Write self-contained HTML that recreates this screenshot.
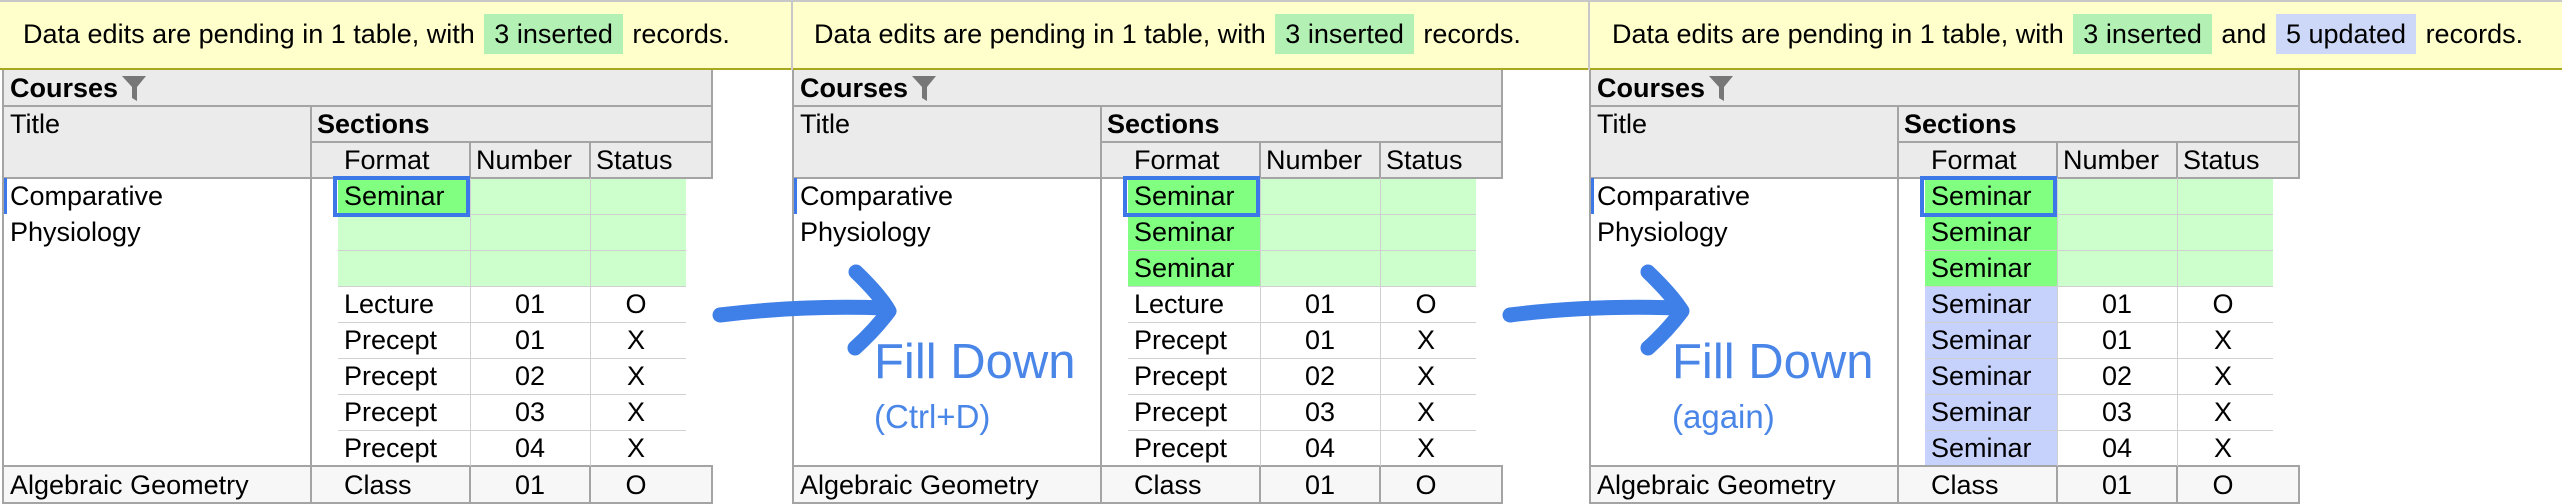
<!DOCTYPE html>
<html><head><meta charset="utf-8"><style>
*{margin:0;padding:0;box-sizing:border-box}
body{width:2562px;height:504px;position:relative;overflow:hidden;background:#fff;font-family:"Liberation Sans",sans-serif;font-size:27px;color:#000}
.a{position:absolute}
.t{position:absolute;line-height:36px;white-space:nowrap}
.c{text-align:center}
.ban{position:absolute;left:0;top:0;width:2562px;height:70px;background:#ffffcc;border-top:2px solid #c8c8c8;border-bottom:2px solid #a8a820}
.bt{position:absolute;top:14px;line-height:40px;white-space:nowrap;font-size:27px}
.ins{display:inline-block;background:#b3f0b3;padding:0 10px;margin:0 2px}
.upd{display:inline-block;background:#cdd8f8;padding:0 10px;margin:0 2px}
.p{position:absolute;top:0;width:712px;height:504px}
.hd{position:absolute;left:0;top:70px;width:711px;height:108px;background:#ebebeb}
.hl{position:absolute;height:2px;background:#a4a4a4}
.vl{position:absolute;width:2px;background:#a4a4a4}
.sl{position:absolute;height:1px;background:#d0d0d0}
.sv{position:absolute;width:1px;background:#d0d0d0}
.fill{font-size:49px;color:#4a86e8;position:absolute;white-space:nowrap}
.sub{font-size:33px;color:#4a86e8;position:absolute;white-space:nowrap}
</style></head><body>

<div class="ban"></div>
<div class="a" style="left:791px;top:0;width:2px;height:70px;background:#c8c8c8"></div>
<div class="a" style="left:1588px;top:0;width:2px;height:70px;background:#c8c8c8"></div>
<div class="bt" style="left:23px">Data edits are pending in 1 table, with <span class="ins">3 inserted</span> records.</div>
<div class="bt" style="left:814px">Data edits are pending in 1 table, with <span class="ins">3 inserted</span> records.</div>
<div class="bt" style="left:1612px">Data edits are pending in 1 table, with <span class="ins">3 inserted</span> and <span class="upd">5 updated</span> records.</div>

<!-- PANEL TEMPLATE x3 -->
<div class="p" style="left:2px">
 <div class="hd"></div>
 <div class="a" style="left:0;top:466px;width:711px;height:38px;background:#f7f7f7"></div>
 <div class="a" style="left:336px;top:178px;width:348px;height:108px;background:#ccffcc"></div>
 <div class="a" style="left:336px;top:178px;width:132px;height:36px;background:#80ff80"></div>
 <div class="hl" style="left:0;top:105px;width:711px"></div>
 <div class="hl" style="left:309px;top:141px;width:402px"></div>
 <div class="hl" style="left:0;top:177px;width:711px"></div>
 <div class="hl" style="left:0;top:465px;width:711px"></div>
 <div class="hl" style="left:0;top:502px;width:711px"></div>
 <div class="vl" style="left:0;top:70px;height:434px"></div>
 <div class="vl" style="left:308px;top:107px;height:397px"></div>
 <div class="vl" style="left:467px;top:142px;height:36px"></div>
 <div class="vl" style="left:587px;top:142px;height:36px"></div>
 <div class="vl" style="left:467px;top:466px;height:38px"></div>
 <div class="vl" style="left:587px;top:466px;height:38px"></div>
 <div class="vl" style="left:709px;top:70px;height:108px"></div>
 <div class="vl" style="left:709px;top:466px;height:38px"></div>
 <div class="sv" style="left:468px;top:178px;height:288px"></div>
 <div class="sv" style="left:588px;top:178px;height:288px"></div>
 <div class="sl" style="left:336px;top:214px;width:348px"></div>
 <div class="sl" style="left:336px;top:250px;width:348px"></div>
 <div class="sl" style="left:336px;top:286px;width:348px"></div>
 <div class="sl" style="left:336px;top:322px;width:348px"></div>
 <div class="sl" style="left:336px;top:358px;width:348px"></div>
 <div class="sl" style="left:336px;top:394px;width:348px"></div>
 <div class="sl" style="left:336px;top:430px;width:348px"></div>
 <div class="a" style="left:331px;top:176px;width:137px;height:41px;border:4px solid #3c78e8"></div>
 <div class="a" style="left:2px;top:178px;width:3px;height:36px;background:#3c78e8"></div>
 <div class="t" style="left:8px;top:70px;font-weight:bold">Courses</div>
 <svg class="a" style="left:120px;top:76px" width="24" height="26" viewBox="0 0 24 26"><path d="M0 0H24L15 11V25L10 22V11Z" fill="#777"/></svg>
 <div class="t" style="left:8px;top:106px">Title</div>
 <div class="t" style="left:315px;top:106px;font-weight:bold">Sections</div>
 <div class="t" style="left:342px;top:142px">Format</div>
 <div class="t" style="left:474px;top:142px">Number</div>
 <div class="t" style="left:594px;top:142px">Status</div>
 <div class="t" style="left:8px;top:178px">Comparative</div>
 <div class="t" style="left:8px;top:214px">Physiology</div>
 <div class="t" style="left:342px;top:178px">Seminar</div>
 <div class="t" style="left:342px;top:286px">Lecture</div>
 <div class="t" style="left:342px;top:322px">Precept</div>
 <div class="t" style="left:342px;top:358px">Precept</div>
 <div class="t" style="left:342px;top:394px">Precept</div>
 <div class="t" style="left:342px;top:430px">Precept</div>
 <div class="t c" style="left:468px;width:120px;top:286px">01</div>
 <div class="t c" style="left:468px;width:120px;top:322px">01</div>
 <div class="t c" style="left:468px;width:120px;top:358px">02</div>
 <div class="t c" style="left:468px;width:120px;top:394px">03</div>
 <div class="t c" style="left:468px;width:120px;top:430px">04</div>
 <div class="t c" style="left:588px;width:92px;top:286px">O</div>
 <div class="t c" style="left:588px;width:92px;top:322px">X</div>
 <div class="t c" style="left:588px;width:92px;top:358px">X</div>
 <div class="t c" style="left:588px;width:92px;top:394px">X</div>
 <div class="t c" style="left:588px;width:92px;top:430px">X</div>
 <div class="t" style="left:8px;top:467px">Algebraic Geometry</div>
 <div class="t" style="left:342px;top:467px">Class</div>
 <div class="t c" style="left:468px;width:120px;top:467px">01</div>
 <div class="t c" style="left:588px;width:92px;top:467px">O</div>
</div>

<div class="p" style="left:792px">
 <div class="hd"></div>
 <div class="a" style="left:0;top:466px;width:711px;height:38px;background:#f7f7f7"></div>
 <div class="a" style="left:336px;top:178px;width:348px;height:108px;background:#ccffcc"></div>
 <div class="a" style="left:336px;top:178px;width:132px;height:108px;background:#80ff80"></div>
 <div class="hl" style="left:0;top:105px;width:711px"></div>
 <div class="hl" style="left:309px;top:141px;width:402px"></div>
 <div class="hl" style="left:0;top:177px;width:711px"></div>
 <div class="hl" style="left:0;top:465px;width:711px"></div>
 <div class="hl" style="left:0;top:502px;width:711px"></div>
 <div class="vl" style="left:0;top:70px;height:434px"></div>
 <div class="vl" style="left:308px;top:107px;height:397px"></div>
 <div class="vl" style="left:467px;top:142px;height:36px"></div>
 <div class="vl" style="left:587px;top:142px;height:36px"></div>
 <div class="vl" style="left:467px;top:466px;height:38px"></div>
 <div class="vl" style="left:587px;top:466px;height:38px"></div>
 <div class="vl" style="left:709px;top:70px;height:108px"></div>
 <div class="vl" style="left:709px;top:466px;height:38px"></div>
 <div class="sv" style="left:468px;top:178px;height:288px"></div>
 <div class="sv" style="left:588px;top:178px;height:288px"></div>
 <div class="sl" style="left:336px;top:214px;width:348px"></div>
 <div class="sl" style="left:336px;top:250px;width:348px"></div>
 <div class="sl" style="left:336px;top:286px;width:348px"></div>
 <div class="sl" style="left:336px;top:322px;width:348px"></div>
 <div class="sl" style="left:336px;top:358px;width:348px"></div>
 <div class="sl" style="left:336px;top:394px;width:348px"></div>
 <div class="sl" style="left:336px;top:430px;width:348px"></div>
 <div class="a" style="left:331px;top:176px;width:137px;height:41px;border:4px solid #3c78e8"></div>
 <div class="a" style="left:2px;top:178px;width:3px;height:36px;background:#3c78e8"></div>
 <div class="t" style="left:8px;top:70px;font-weight:bold">Courses</div>
 <svg class="a" style="left:120px;top:76px" width="24" height="26" viewBox="0 0 24 26"><path d="M0 0H24L15 11V25L10 22V11Z" fill="#777"/></svg>
 <div class="t" style="left:8px;top:106px">Title</div>
 <div class="t" style="left:315px;top:106px;font-weight:bold">Sections</div>
 <div class="t" style="left:342px;top:142px">Format</div>
 <div class="t" style="left:474px;top:142px">Number</div>
 <div class="t" style="left:594px;top:142px">Status</div>
 <div class="t" style="left:8px;top:178px">Comparative</div>
 <div class="t" style="left:8px;top:214px">Physiology</div>
 <div class="t" style="left:342px;top:178px">Seminar</div>
 <div class="t" style="left:342px;top:214px">Seminar</div>
 <div class="t" style="left:342px;top:250px">Seminar</div>
 <div class="t" style="left:342px;top:286px">Lecture</div>
 <div class="t" style="left:342px;top:322px">Precept</div>
 <div class="t" style="left:342px;top:358px">Precept</div>
 <div class="t" style="left:342px;top:394px">Precept</div>
 <div class="t" style="left:342px;top:430px">Precept</div>
 <div class="t c" style="left:468px;width:120px;top:286px">01</div>
 <div class="t c" style="left:468px;width:120px;top:322px">01</div>
 <div class="t c" style="left:468px;width:120px;top:358px">02</div>
 <div class="t c" style="left:468px;width:120px;top:394px">03</div>
 <div class="t c" style="left:468px;width:120px;top:430px">04</div>
 <div class="t c" style="left:588px;width:92px;top:286px">O</div>
 <div class="t c" style="left:588px;width:92px;top:322px">X</div>
 <div class="t c" style="left:588px;width:92px;top:358px">X</div>
 <div class="t c" style="left:588px;width:92px;top:394px">X</div>
 <div class="t c" style="left:588px;width:92px;top:430px">X</div>
 <div class="t" style="left:8px;top:467px">Algebraic Geometry</div>
 <div class="t" style="left:342px;top:467px">Class</div>
 <div class="t c" style="left:468px;width:120px;top:467px">01</div>
 <div class="t c" style="left:588px;width:92px;top:467px">O</div>
</div>

<div class="p" style="left:1589px">
 <div class="hd"></div>
 <div class="a" style="left:0;top:466px;width:711px;height:38px;background:#f7f7f7"></div>
 <div class="a" style="left:336px;top:178px;width:348px;height:108px;background:#ccffcc"></div>
 <div class="a" style="left:336px;top:178px;width:132px;height:108px;background:#80ff80"></div>
 <div class="a" style="left:336px;top:286px;width:132px;height:180px;background:#c6d2fc"></div>
 <div class="hl" style="left:0;top:105px;width:711px"></div>
 <div class="hl" style="left:309px;top:141px;width:402px"></div>
 <div class="hl" style="left:0;top:177px;width:711px"></div>
 <div class="hl" style="left:0;top:465px;width:711px"></div>
 <div class="hl" style="left:0;top:502px;width:711px"></div>
 <div class="vl" style="left:0;top:70px;height:434px"></div>
 <div class="vl" style="left:308px;top:107px;height:397px"></div>
 <div class="vl" style="left:467px;top:142px;height:36px"></div>
 <div class="vl" style="left:587px;top:142px;height:36px"></div>
 <div class="vl" style="left:467px;top:466px;height:38px"></div>
 <div class="vl" style="left:587px;top:466px;height:38px"></div>
 <div class="vl" style="left:709px;top:70px;height:108px"></div>
 <div class="vl" style="left:709px;top:466px;height:38px"></div>
 <div class="sv" style="left:468px;top:178px;height:288px"></div>
 <div class="sv" style="left:588px;top:178px;height:288px"></div>
 <div class="sl" style="left:336px;top:214px;width:348px"></div>
 <div class="sl" style="left:336px;top:250px;width:348px"></div>
 <div class="sl" style="left:336px;top:286px;width:348px"></div>
 <div class="sl" style="left:336px;top:322px;width:348px"></div>
 <div class="sl" style="left:336px;top:358px;width:348px"></div>
 <div class="sl" style="left:336px;top:394px;width:348px"></div>
 <div class="sl" style="left:336px;top:430px;width:348px"></div>
 <div class="a" style="left:331px;top:176px;width:137px;height:41px;border:4px solid #3c78e8"></div>
 <div class="a" style="left:2px;top:178px;width:3px;height:36px;background:#3c78e8"></div>
 <div class="t" style="left:8px;top:70px;font-weight:bold">Courses</div>
 <svg class="a" style="left:120px;top:76px" width="24" height="26" viewBox="0 0 24 26"><path d="M0 0H24L15 11V25L10 22V11Z" fill="#777"/></svg>
 <div class="t" style="left:8px;top:106px">Title</div>
 <div class="t" style="left:315px;top:106px;font-weight:bold">Sections</div>
 <div class="t" style="left:342px;top:142px">Format</div>
 <div class="t" style="left:474px;top:142px">Number</div>
 <div class="t" style="left:594px;top:142px">Status</div>
 <div class="t" style="left:8px;top:178px">Comparative</div>
 <div class="t" style="left:8px;top:214px">Physiology</div>
 <div class="t" style="left:342px;top:178px">Seminar</div>
 <div class="t" style="left:342px;top:214px">Seminar</div>
 <div class="t" style="left:342px;top:250px">Seminar</div>
 <div class="t" style="left:342px;top:286px">Seminar</div>
 <div class="t" style="left:342px;top:322px">Seminar</div>
 <div class="t" style="left:342px;top:358px">Seminar</div>
 <div class="t" style="left:342px;top:394px">Seminar</div>
 <div class="t" style="left:342px;top:430px">Seminar</div>
 <div class="t c" style="left:468px;width:120px;top:286px">01</div>
 <div class="t c" style="left:468px;width:120px;top:322px">01</div>
 <div class="t c" style="left:468px;width:120px;top:358px">02</div>
 <div class="t c" style="left:468px;width:120px;top:394px">03</div>
 <div class="t c" style="left:468px;width:120px;top:430px">04</div>
 <div class="t c" style="left:588px;width:92px;top:286px">O</div>
 <div class="t c" style="left:588px;width:92px;top:322px">X</div>
 <div class="t c" style="left:588px;width:92px;top:358px">X</div>
 <div class="t c" style="left:588px;width:92px;top:394px">X</div>
 <div class="t c" style="left:588px;width:92px;top:430px">X</div>
 <div class="t" style="left:8px;top:467px">Algebraic Geometry</div>
 <div class="t" style="left:342px;top:467px">Class</div>
 <div class="t c" style="left:468px;width:120px;top:467px">01</div>
 <div class="t c" style="left:588px;width:92px;top:467px">O</div>
</div>

<svg class="a" style="left:0;top:0" width="2562" height="504">
 <g fill="none" stroke="#3f7fe8" stroke-width="15" stroke-linecap="round" stroke-linejoin="round">
  <path d="M720 315 Q800 305 885 308"/>
  <path d="M856 272 Q880 295 889 311 Q875 330 855 348"/>
  <path d="M1510 315 Q1590 305 1679 308"/>
  <path d="M1648 272 Q1672 295 1682 311 Q1668 330 1648 348"/>
 </g>
</svg>
<div class="fill" style="left:874px;top:334px">Fill Down</div>
<div class="sub" style="left:874px;top:398px">(Ctrl+D)</div>
<div class="fill" style="left:1672px;top:334px">Fill Down</div>
<div class="sub" style="left:1672px;top:398px">(again)</div>

</body></html>
